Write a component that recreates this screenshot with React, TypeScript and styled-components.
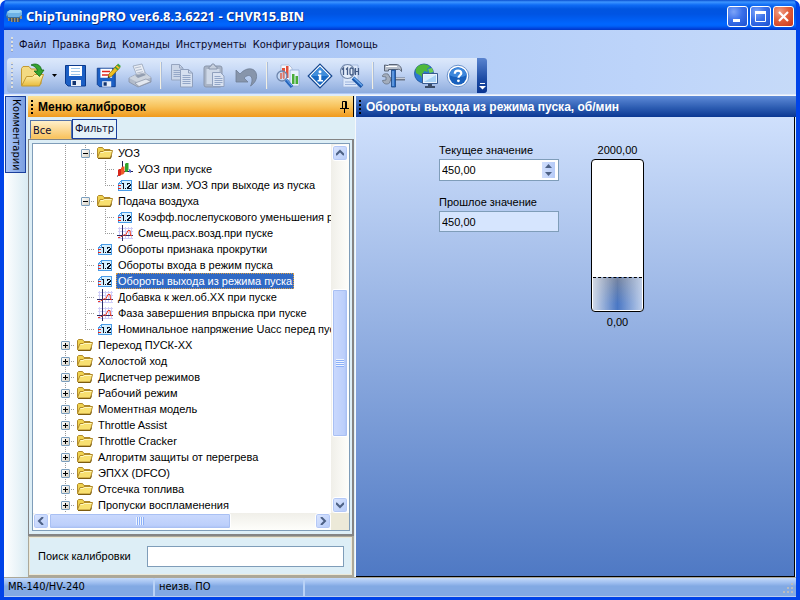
import React from 'react';
import styled, { createGlobalStyle, css } from 'styled-components';

const sans = '"Liberation Sans", Arial, sans-serif';
const menuFont = '"DejaVu Sans Condensed", Tahoma, sans-serif';

const Global = createGlobalStyle`
  * { box-sizing: border-box; }
  body { margin: 0; font: 11px/16px ${sans}; color: #000; }
  button, input { font: inherit; color: inherit; margin: 0; padding: 0; border: 0; background: none; }
  button { display: flex; align-items: center; justify-content: center; cursor: default; }
  svg { display: block; flex: none; }
`;

/* ---------- window frame ---------- */

const Window = styled.div`
  display: flex;
  flex-direction: column;
  min-height: 100vh;
  border: solid #0043e8;
  border-width: 0 4px 4px;
  border-radius: 7px 7px 0 0;
  background: #0055e5;
  overflow: hidden;
`;

const TitleBar = styled.header`
  display: flex;
  align-items: center;
  gap: 4px;
  height: 30px;
  margin: 0 -4px;
  padding: 2px 6px 0;
  background: linear-gradient(#0a4fd0 0, #3d95ff 2px, #0f6cf5 5px, #0055e0 9px, #0054e3 14px, #0066ff 24px, #0062f8 26px, #003dd7 29px, #0037c0 30px);
`;

const Title = styled.h1`
  flex: 1;
  margin: 0;
  font: bold 13px/18px "Noto Sans", "Open Sans", sans-serif;
  color: #fff;
  text-shadow: 1px 1px #0a2a80;
  white-space: nowrap;
`;

const CaptionButtons = styled.div`
  display: flex;
  gap: 2px;
`;

const CaptionButton = styled.button<{ $close?: boolean }>`
  width: 21px;
  height: 21px;
  border: 1px solid #fff;
  border-radius: 3px;
  background: ${p => p.$close
    ? 'radial-gradient(circle at 30% 25%, #f0a088 0, #e2603c 45%, #c8341a 100%)'
    : 'radial-gradient(circle at 30% 25%, #7da4f8 0, #3a70ea 45%, #1b4fd0 100%)'};
`;

/* ---------- menu and toolbar ---------- */

const Chrome = styled.div`
  background: linear-gradient(90deg, #9fbcf5 0, #b2cdf7 55%, #bdd4fa 80%, #c6daf8 100%);
  padding: 1px 2px 1px 3px;
  border-bottom: 1px solid #dfe9fb;
`;

const MenuBar = styled.nav`
  display: flex;
  align-items: center;
  height: 27px;
  padding-left: 4px;
`;

const Grip = styled.span<{ $h: number; $dark?: boolean }>`
  width: 3px;
  height: ${p => p.$h}px;
  flex: none;
  background: ${p => p.$dark
    ? 'repeating-linear-gradient(#000 0 2px, transparent 2px 4px) 0 0 / 2px 100% no-repeat'
    : 'repeating-linear-gradient(#dfe0dc 0 2px, #8fa5cf 2px 3px, transparent 3px 4px) 0 0 / 2px 100% no-repeat'};
`;

const MenuItem = styled.button`
  padding: 0 3px;
  height: 20px;
  font: 11px/20px ${menuFont};
  color: #0a0a2a;
  white-space: nowrap;
  &:first-of-type { margin-left: 2px; }
`;

const ToolBar = styled.div`
  display: flex;
  align-items: center;
  width: max-content;
  height: 35px;
  padding-left: 4px;
  border-radius: 4px 3px 3px 4px;
  background: linear-gradient(#dde9fb 0, #cbdcf7 30%, #b3c9ee 60%, #8eacdd 100%);
  overflow: hidden;
`;

const ToolGroup = styled.div`
  display: flex;
  &:first-of-type { margin-left: 3px; }
`;

const ToolButton = styled.button`
  width: 32px;
  height: 32px;
`;

const DropButton = styled.button`
  width: 11px;
  height: 32px;
`;

const Separator = styled.span`
  width: 2px;
  height: 27px;
  margin: 0 4px;
  background: linear-gradient(90deg, #f1efe4 50%, #a9bddd 50%);
`;

const Overflow = styled.button`
  align-self: stretch;
  width: 10px;
  margin-left: 3px;
  background: linear-gradient(#5a84cf, #1c4ba4 60%, #0a3591);
  align-items: flex-end;
  padding-bottom: 3px;
`;

/* ---------- main area ---------- */

const Main = styled.main`
  display: flex;
  flex: 1;
  background: #ddeef6;
`;

const SideStrip = styled.aside`
  width: 24px;
  flex: none;
  padding: 1px 0 0 1px;
  background: linear-gradient(90deg, #fff, #d9ebf3);
`;

const SideTab = styled.button`
  width: 21px;
  height: 77px;
  border: 1px solid #1b3f9c;
  background: linear-gradient(90deg, #a9c4f8, #7b9fe0);
  writing-mode: vertical-rl;
  font: 11px/16px ${menuFont};
`;

const LeftPanel = styled.section`
  display: flex;
  flex-direction: column;
  width: 326px;
  flex: none;
`;

const captionStyle = css`
  display: flex;
  align-items: center;
  gap: 4px;
  height: 21px;
  margin: 0;
  flex: none;
  font: bold 12px/20px ${sans};
  white-space: nowrap;
`;

const OrangeCaption = styled.header`
  ${captionStyle}
  margin-top: 1px;
  padding: 0 2px 0 3px;
  background: linear-gradient(#fce29a, #f8c35c 50%, #f09a1c);
  border-right: 1px solid #000;
`;

const BlueCaption = styled.header`
  ${captionStyle}
  padding-left: 3px;
  color: #fff;
  background: linear-gradient(#5f8bd8, #2d5db2 55%, #0a3793);
`;

const CaptionText = styled.h2`
  flex: 1;
  margin: 0;
  font: inherit;
`;

const PinButton = styled.button`
  width: 14px;
  height: 16px;
`;

const Tabs = styled.div`
  display: flex;
  align-items: flex-end;
  height: 22px;
  padding-left: 2px;
`;

const Tab = styled.button<{ $active?: boolean }>`
  height: ${p => (p.$active ? 19 : 20)}px;
  width: ${p => (p.$active ? 42 : 45)}px;
  padding-left: 2px;
  padding-top: ${p => (p.$active ? 2 : 0)}px;
  justify-content: flex-start;
  font: 11px/16px ${menuFont};
  color: #0b0b30;
  border: 1px solid ${p => (p.$active ? '#5573a8' : '#1b3f9c')};
  border-bottom-color: ${p => (p.$active ? '#f9c767' : '#1b3f9c')};
  background: ${p => (p.$active ? 'linear-gradient(#fff0cb, #f9c35f)' : '#e6f3f9')};
`;

const TreeFrame = styled.div`
  flex: 1;
  display: flex;
  padding: 3px 2px 3px 3px;
  border: solid #848484;
  border-width: 1px 2px 2px 1px;
`;

const TreeView = styled.div`
  flex: 1;
  min-width: 0;
  display: grid;
  grid-template: minmax(368px, 1fr) 17px / minmax(0, 1fr) 18px;
  border: 1px solid #7f9db9;
  background: #fff;
`;

const Tree = styled.ul`
  margin: 0;
  padding: 1px 0 0 22px;
  list-style: none;
  overflow: hidden;
  background: #fff;
`;

const Row = styled.li`
  display: flex;
  height: 16px;
`;

type CellKind = 'v' | 't' | 'l' | 'b';

const dotsV = 'repeating-linear-gradient(#9a9a9a 0 1px, transparent 1px 2px)';
const dotsH = 'repeating-linear-gradient(90deg, #9a9a9a 0 1px, transparent 1px 2px)';

const cellBackground: Record<CellKind, string> = {
  v: `${dotsV} 10px 0 / 1px 16px no-repeat`,
  t: `${dotsV} 10px 0 / 1px 16px no-repeat, ${dotsH} 10px 8px / 10px 1px no-repeat`,
  l: `${dotsV} 10px 0 / 1px 9px no-repeat, ${dotsH} 10px 8px / 10px 1px no-repeat`,
  b: `${dotsV} 10px 0 / 1px 16px no-repeat, ${dotsH} 10px 8px / 10px 1px no-repeat`,
};

const Cell = styled.span<{ $kind: CellKind }>`
  width: 20px;
  height: 16px;
  flex: none;
  display: flex;
  align-items: center;
  padding: 1px 0 0 6px;
  background: ${p => cellBackground[p.$kind]};
`;

const Expander = styled.button`
  width: 9px;
  height: 9px;
  border: 1px solid #7b9ebd;
  border-radius: 1px;
  background: linear-gradient(135deg, #fff, #d5d0c3);
`;

const IconCell = styled.span`
  width: 20px;
  flex: none;
  padding-left: 2px;
`;

const Label = styled.span<{ $selected?: boolean }>`
  margin-left: 1px;
  padding: 0 2px;
  white-space: nowrap;
  ${p => p.$selected && css`
    background: #316ac5;
    color: #fff;
    outline: 1px dotted #e0a040;
    outline-offset: -1px;
  `}
`;

const VBar = styled.div`
  display: flex;
  flex-direction: column;
  padding: 1px 1px 0 1px;
  background: linear-gradient(90deg, #f0efe9, #fefefb);
`;

const HBar = styled.div`
  display: flex;
  padding: 0 0 1px;
  background: linear-gradient(#f0efe9, #fefefb);
`;

const Corner = styled.div`
  background: #ece9d8;
`;

const ScrollButton = styled.button`
  width: 16px;
  height: 16px;
  flex: none;
  border: 1px solid #fff;
  border-radius: 3px;
  background: linear-gradient(135deg, #dbe6ff, #b6cbf8);
  box-shadow: inset 0 0 0 1px #b4c8f6;
`;

const Track = styled.div<{ $vertical?: boolean }>`
  flex: 1;
  display: flex;
  flex-direction: ${p => (p.$vertical ? 'column' : 'row')};
  min-width: 0;
`;

const TrackSpace = styled.span<{ $grow: number }>`
  flex: ${p => p.$grow} 1 0;
`;

const Thumb = styled.button<{ $vertical?: boolean; $grow: number }>`
  flex: ${p => p.$grow} 1 0;
  border: 1px solid #fff;
  border-radius: 2px;
  box-shadow: inset 0 0 0 1px #a9c0f3;
  background: linear-gradient(${p => (p.$vertical ? '90deg' : '180deg')}, #cad9fd, #bccffb 80%, #a9c0f3);
`;

const ThumbGrip = styled.span<{ $vertical?: boolean }>`
  width: 8px;
  height: 8px;
  background: repeating-linear-gradient(${p => (p.$vertical ? '180deg' : '90deg')}, #eef4fe 0 1px, #8cb0f8 1px 2px);
`;

const SearchBar = styled.form`
  display: flex;
  align-items: center;
  gap: 16px;
  height: 41px;
  flex: none;
  padding: 0 8px 0 9px;
  border: solid #aca899;
  border-width: 1px 2px 2px 1px;
  box-shadow: inset 0 0 0 1px #ece9d8;
`;

const SearchInput = styled.input`
  flex: 1;
  min-width: 0;
  height: 21px;
  border: 1px solid #7f9db9;
  background: #fff;
  padding: 0 3px;
`;

const RightPanel = styled.section`
  flex: 1;
  display: flex;
  flex-direction: column;
  margin-left: 1px;
  border: solid #f6f8fb;
  border-width: 1px 0 0 1px;
`;

const RightBody = styled.div`
  flex: 1;
  display: grid;
  grid-template-columns: 120px 53px;
  align-content: start;
  column-gap: 32px;
  padding: 25px 0 0 83px;
  margin-right: 1px;
  border: solid #000;
  border-width: 0 1px 1px 0;
  background: linear-gradient(#cfe0fc, #4f79c4);
`;

const Fields = styled.div`
  display: flex;
  flex-direction: column;
  gap: 13px;
`;

const Field = styled.label`
  display: flex;
  flex-direction: column;
  gap: 1px;
`;

const Spin = styled.span<{ $readOnly?: boolean }>`
  display: flex;
  align-items: center;
  height: ${p => (p.$readOnly ? 21 : 22)}px;
  padding: 0 3px 0 2px;
  border: 1px solid #7f9db9;
  background: ${p => (p.$readOnly ? '#d6e5fe' : '#fff')};
`;

const ValueInput = styled.input`
  flex: 1;
  min-width: 0;
  height: 18px;
`;

const SpinButtons = styled.span`
  width: 13px;
  height: 16px;
  display: flex;
  flex-direction: column;
`;

const SpinButton = styled.button`
  width: 13px;
  height: 8px;
  background: linear-gradient(90deg, #d0defc, #b6cbf8);
`;

const GaugeColumn = styled.div`
  display: flex;
  flex-direction: column;
  align-items: center;
  white-space: nowrap;
`;

const Gauge = styled.div`
  display: flex;
  flex-direction: column;
  justify-content: flex-end;
  width: 53px;
  height: 153px;
  margin: 1px 0 2px;
  padding: 1px;
  border: 1px solid #000;
  border-radius: 4px;
  background: #fff;
`;

const GaugeFill = styled.div`
  border-top: 1px dashed #000;
  background:
    linear-gradient(90deg, rgba(220, 226, 236, 0.9), rgba(200, 214, 238, 0) 50%, rgba(200, 214, 238, 0.9)),
    linear-gradient(#74839f, #4a77c4 80%);
`;

/* ---------- status bar ---------- */

const StatusBar = styled.footer`
  display: flex;
  height: 20px;
  flex: none;
  border-top: 1px solid #aca899;
  border-bottom: 1px solid #b9cdf0;
  background: linear-gradient(#c4dafa, #9abbee 30%, #82a9e3 45%, #82a9e3);
`;

const StatusPart = styled.span<{ $width?: number }>`
  ${p => (p.$width ? css`width: ${p.$width}px; border-right: 2px solid #b9d2f6;` : css`flex: 1;`)}
  padding: 1px 4px;
  font: 11px/16px ${menuFont};
  white-space: nowrap;
`;

const ResizeGrip = styled.svg`
  align-self: flex-end;
`;

/* ---------- icons ---------- */

const ChipIcon = () => (
  <svg width="16" height="16" viewBox="0 0 16 16">
    <path d="M1 4l3-2h11l1 2v4l-2 1H2L0 8z" fill="#6db2e6" />
    <path d="M1 4l3-2h11l1 2-3 1H3z" fill="#9ad2f4" />
    <path d="M1 6l1 3h11l3-2v3l-2 1H2L0 9z" fill="#3b6f9f" />
    <path d="M3 10v3M6 10v4M9 10v4M12 10v4M15 8v3" stroke="#c5a05a" strokeWidth="1.5" />
    <path d="M4 10v3M7 10v4M10 10v4M13 10v4" stroke="#4b3c22" />
  </svg>
);

const OpenIcon = () => (
  <svg width="26" height="26" viewBox="0 0 26 26">
    <defs>
      <linearGradient id="fold" x1="0" y1="0" x2="0" y2="1">
        <stop offset="0" stopColor="#fff3b0" /><stop offset="1" stopColor="#e8bb3c" />
      </linearGradient>
    </defs>
    <path d="M1.500 22V5.500l1.500-2h6l2 2.500h10v15z" fill="#f3da82" stroke="#c39a32" />
    <path d="M1.500 23l5-9.500h6l2-2h9L19.500 23z" fill="url(#fold)" stroke="#c39a32" />
    <path d="M11 2c5-2.500 10 0 10.500 5H24l-4.500 6.500L14 8h3.500c-.5-3-3-5-6.500-6z" fill="#35a32f" stroke="#156b1a" strokeWidth=".8" />
  </svg>
);

const DownArrow = () => (
  <svg width="5" height="3" viewBox="0 0 5 3"><path d="M0 0h5L2.500 3z" fill="#000" /></svg>
);

const Floppy = () => (
  <>
    <path d="M2.500 2.500h20v20.500H5L2.500 20.500z" fill="#1c5fc4" stroke="#0c3a8c" />
    <path d="M6 3h13v10H6z" fill="#fff" />
    <path d="M8 17h10v6H8z" fill="#e8eef8" />
    <path d="M9.500 18h3.500v4H9.500z" fill="#12336f" />
  </>
);

const SaveIcon = () => (
  <svg width="26" height="26" viewBox="0 0 26 26">
    <Floppy />
    <path d="M8 5.500h9M8 8.500h9M8 11.500h9" stroke="#9ec6ea" />
  </svg>
);

const SaveEditIcon = () => (
  <svg width="26" height="26" viewBox="0 0 26 26">
    <g transform="translate(0 3) scale(.9)"><Floppy /></g>
    <path d="M7 8.500h8M7 12h8" stroke="#e0271c" strokeWidth="1.500" />
    <path d="M13 15l1-4L22 2l3 2.500L17 13z" fill="#f0c020" stroke="#8a6a10" strokeWidth=".8" />
    <path d="M22 2l1-1.500 2.800 2.500L25 4.500z" fill="#3aa53a" />
    <path d="M20 4l3 2.700" stroke="#2f9e35" strokeWidth="1.500" />
    <path d="M13 15l.5-2 1.500 1.200z" fill="#222" />
  </svg>
);

const PrintIcon = () => (
  <svg width="26" height="26" viewBox="0 0 26 26">
    <path d="M6 3l9-2 4 11-8 3z" fill="#e9edf4" stroke="#98a4b8" strokeWidth=".8" />
    <path d="M8 5l6-1.300M9 7.500l6-1.300M10 10l6-1.300" stroke="#b2bccd" />
    <path d="M2 15l6-3 10-2 6 4.500v4.500l-13 5-9-5z" fill="#b3bcca" stroke="#8691a5" strokeWidth=".8" />
    <path d="M2 15l6-3 10-2 6 4.500-13 5z" fill="#ced5df" />
    <path d="M8 20l11-4 5 2.500-12 5z" fill="#e3e8f0" stroke="#8691a5" strokeWidth=".7" />
    <path d="M8 12.500l9-2 2 1.500-8 3z" fill="#929db0" />
  </svg>
);

const CopyIcon = () => (
  <svg width="26" height="26" viewBox="0 0 26 26">
    <path d="M2.500 1.500h8l3.500 3.500v12H2.500z" fill="#ccd7e9" stroke="#96a5c0" />
    <path d="M10.500 1.500V5H14" fill="none" stroke="#96a5c0" />
    <path d="M4.500 7.500h7M4.500 9.500h7M4.500 11.500h7M4.500 13.500h7" stroke="#96a8c8" />
    <path d="M11.500 6.500h8l4 3.500v14h-12z" fill="#d6e0f0" stroke="#90a0bd" />
    <path d="M19.500 6.500V10h4" fill="none" stroke="#90a0bd" />
    <path d="M13.500 12.500h8M13.500 14.500h8M13.500 16.500h8M13.500 18.500h8M13.500 20.500h8" stroke="#93a6c7" />
  </svg>
);

const PasteIcon = () => (
  <svg width="26" height="26" viewBox="0 0 26 26">
    <rect x="3" y="3" width="18" height="21" rx="2" fill="#a9b4c6" stroke="#8b97ac" />
    <path d="M5.500 6h13v15h-13z" fill="#cfd9e8" />
    <path d="M8 6V4l2-1 1-2h2l1 2 2 1v2z" fill="#c6cfdd" stroke="#8491a8" strokeWidth=".9" />
    <path d="M11.500 9.500h8l3.500 3.500v10.500H11.500z" fill="#d9e2f1" stroke="#90a0bd" />
    <path d="M13.500 13.500h6M13.500 15.500h8M13.500 17.500h8M13.500 19.500h8M13.500 21.500h6" stroke="#93a6c7" />
  </svg>
);

const UndoIcon = () => (
  <svg width="26" height="26" viewBox="0 0 26 26">
    <path d="M3 7v12h12l-4-4c4-4 8-3 8 2 0 2-.5 4-1.500 6C22 20 24 16 23.500 12 23 5 14 3 7 11z" fill="#8795ab" stroke="#6e7d96" strokeWidth=".8" />
  </svg>
);

const ChartIcon = () => (
  <svg width="26" height="26" viewBox="0 0 26 26">
    <path d="M6 2h8l3 3v12H6z" fill="#f6f8fd" stroke="#a6b6d4" strokeWidth=".8" />
    <path d="M7 5h3v10H7zM11 3h2.500v12H11z" fill="#e2513b" />
    <path d="M15 7h9v16h-9z" fill="#e7f1fb" stroke="#92abd4" strokeWidth=".8" />
    <path d="M17 11h2.500v10H17zM20.500 13H23v8h-2.500z" fill="#48ad38" />
    <circle cx="7" cy="13" r="5" fill="#c9dcf5" fillOpacity=".75" stroke="#6e86ad" strokeWidth="1.300" />
    <path d="M5 10h2v6H5zM8 9h1.500v7H8z" fill="#dd6b55" fillOpacity=".8" />
    <path d="M11 17l6 7" stroke="#2464bc" strokeWidth="3.400" />
    <path d="M11 16l6 7" stroke="#6ca8ee" />
  </svg>
);

const InfoIcon = () => (
  <svg width="26" height="26" viewBox="0 0 26 26">
    <path d="M13 1.200L24.800 13 13 24.800 1.200 13z" fill="#fff" stroke="#13468f" strokeWidth="1.200" />
    <path d="M13 3.800l9.200 9.200-9.200 9.200L3.800 13z" fill="#1769c4" />
    <path d="M13 3.800l9.200 9.200H3.800z" fill="#3f8ddb" />
    <circle cx="13" cy="8.800" r="1.500" fill="#fff" />
    <path d="M11 11.500h3.300v5.500H16v1.500h-5.500V17h1.300v-4H11z" fill="#fff" />
  </svg>
);

const BinaryIcon = () => (
  <svg width="26" height="26" viewBox="0 0 26 26">
    <path d="M4 2h15v22H4z" fill="#dce8fa" stroke="#9cb2db" strokeWidth=".8" />
    <path d="M6 19h9M6 21.500h11" stroke="#9cb2db" />
    <circle cx="8.500" cy="8.500" r="7" fill="#e6effb" fillOpacity=".8" stroke="#7388aa" strokeWidth="1.200" />
    <path d="M3 6.500l1.500-1.500v7M7 6.500L8.500 5v7M11 6v5l1 1h1l1-1V6l-1-1h-1z" fill="none" stroke="#445c86" strokeWidth="1.300" />
    <path d="M16.500 5v7M16.500 8.500h3M19.500 5v7" stroke="#445c86" strokeWidth="1.200" />
    <path d="M14 15l9 8.500" stroke="#1a55a8" strokeWidth="4" />
    <path d="M14.500 14.500l8.500 8" stroke="#69a8ec" strokeWidth="1.500" />
  </svg>
);

const ToolsIcon = () => (
  <svg width="26" height="26" viewBox="0 0 26 26">
    <path d="M6 16h18" stroke="#6d7788" strokeWidth="3" />
    <path d="M6 15.500h18" stroke="#c6ccd6" strokeWidth="1.200" />
    <path d="M7 11c-4-1-6 1-5.500 2.500L5 14v3l-3.500.5C2 21 6 22 8.500 20l1.500-4z" fill="#a3adbc" stroke="#667183" strokeWidth=".8" />
    <path d="M3.500 2v6h4V6.500H16c2-.5 3.500 0 4.500 2C21 4.500 18.500 1.500 15 1.500H8L7 2.500z" fill="#b7bfcb" stroke="#596477" />
    <path d="M5 3.500h11" stroke="#fff" />
    <path d="M10.500 7h4v17h-4z" fill="#2b6cc4" stroke="#194683" strokeWidth=".8" />
    <path d="M12 8v15" stroke="#8fc0f4" />
  </svg>
);

const NetIcon = () => (
  <svg width="26" height="26" viewBox="0 0 26 26">
    <circle cx="11" cy="10.500" r="9.500" fill="#2c78d0" stroke="#1c4f96" strokeWidth=".8" />
    <path d="M4 4c4-3.500 9-3.500 13-.5l-3 2.500 1 3-4-1-1 3 3 3-3 4-2-5-5-3-.5-3z" fill="#4fb83b" />
    <path d="M15 6l4-1 1.500 4-4 1z" fill="#6ed04c" />
    <path d="M9.500 10.500h15v10h-15z" fill="#e8f3fd" stroke="#3a5c90" />
    <path d="M11 12h12v7H11z" fill="#a9d2f6" />
    <path d="M11 12h12L11 19z" fill="#d7ecfc" />
    <path d="M15 21h4v2h3v2H12v-2h3z" fill="#3b4b66" />
  </svg>
);

const HelpIcon = () => (
  <svg width="26" height="26" viewBox="0 0 26 26">
    <circle cx="13" cy="13" r="10.800" fill="#fff" stroke="#6c93cc" />
    <circle cx="13" cy="13" r="8.800" fill="#1860bd" />
    <path d="M4.300 12a8.800 8.800 0 0 1 17.400 0c-5 3-12 3-17.400 0z" fill="#3d87dc" />
    <path d="M9.800 10.800c0-4.300 6.500-4 6.500-.6 0 2-2.800 2.200-2.800 4.600" fill="none" stroke="#fff" strokeWidth="2.200" />
    <circle cx="13.400" cy="17.800" r="1.400" fill="#fff" />
  </svg>
);

const FolderIcon = () => (
  <svg width="16" height="16" viewBox="0 0 16 16">
    <path d="M.5 12.500V3.500l1-1h4l1.500 2h6v2" fill="#f0d24e" stroke="#b0892a" />
    <path d="M.5 12.500L3 6.500h3l1-1h8.500l-2 7.500H1z" fill="#f8e070" stroke="#b0892a" />
    <path d="M3.500 7.500h3l1-1h7" fill="none" stroke="#fff8c0" />
    <path d="M1 13.500h12.500l1-3" fill="none" stroke="#7c5c10" />
  </svg>
);

const NumberIcon = () => (
  <svg width="16" height="16" viewBox="0 0 16 16" shapeRendering="crispEdges">
    <path d="M4 3h11v11H1V6h1V5h1V4h1z" fill="#4a9ce8" />
    <path d="M5 4h9v9H2V7h3z" fill="#d5f0ff" />
    <path d="M3 5h1v1H3z" fill="#fff" />
    <path d="M1 8h3v1H1zM1 11h3v1H1z" fill="#e8241a" />
    <path d="M5 6h2v6H6V7H5zM8 11h1v1H8zM10 6h3v1h1v2h-1v1h-1v1h2v1h-4v-2h1V9h1V8h1V7h-2v1h-1z" fill="#0a1020" />
  </svg>
);

const CurveIcon = () => (
  <svg width="16" height="16" viewBox="0 0 16 16">
    <path d="M2.500 2v12M8.500 2v12M11.500 2v12M14.500 2v12M1 3.500h15M1 6.500h15M1 13.500h15" stroke="#cfcef8" />
    <path d="M5.500 0v16M0 10.500h16" stroke="#2c2c66" />
    <path d="M1 12.500h2l1-1h1L7 9.500l1.500 1L11 5.500h2l.5 5h1.500" fill="none" stroke="#ee3a24" />
  </svg>
);

const BarsIcon = () => (
  <svg width="16" height="16" viewBox="0 0 16 16">
    <path d="M5.500 0v11M0 15.500l5.500-5H16" stroke="#22224e" fill="none" />
    <path d="M1 9l1-1h3v5l-2 2H1z" fill="#d8281c" />
    <path d="M4 7l1.500-1.500h2V12L6 13.500H4z" fill="#f05a28" />
    <path d="M8 3l1-1h2.500v7L10 11H8z" fill="#32a62e" />
    <path d="M12 8l2 1v3l-2-1z" fill="#5a6ad0" />
  </svg>
);

const Chevron = ({ d }: { d: string }) => (
  <svg width="8" height="8" viewBox="0 0 8 8"><path d={d} fill="none" stroke="#4d6185" strokeWidth="2" /></svg>
);

/* ---------- data ---------- */

type IconKind = 'folder' | 'number' | 'curve' | 'bars';

interface TreeRow {
  cells: string;
  icon: IconKind;
  text: string;
  selected?: boolean;
}

const treeIcons: Record<IconKind, React.FC> = {
  folder: FolderIcon,
  number: NumberIcon,
  curve: CurveIcon,
  bars: BarsIcon,
};

/* Cells: v = line, t = branch, l = last branch, "-" and "+" = expander. */
const rows: TreeRow[] = [
  { cells: 'v-', icon: 'folder', text: 'УОЗ' },
  { cells: 'vvt', icon: 'bars', text: 'УОЗ при пуске' },
  { cells: 'vvl', icon: 'number', text: 'Шаг изм. УОЗ при выходе из пуска' },
  { cells: 'v-', icon: 'folder', text: 'Подача воздуха' },
  { cells: 'vvt', icon: 'number', text: 'Коэфф.послепускового уменьшения р' },
  { cells: 'vvl', icon: 'curve', text: 'Смещ.расх.возд.при пуске' },
  { cells: 'vt', icon: 'number', text: 'Обороты признака прокрутки' },
  { cells: 'vt', icon: 'number', text: 'Обороты входа в режим пуска' },
  { cells: 'vt', icon: 'number', text: 'Обороты выхода из режима пуска', selected: true },
  { cells: 'vt', icon: 'curve', text: 'Добавка к жел.об.ХХ при пуске' },
  { cells: 'vt', icon: 'curve', text: 'Фаза завершения впрыска при пуске' },
  { cells: 'vl', icon: 'number', text: 'Номинальное напряжение Uacc перед пус' },
  { cells: '+', icon: 'folder', text: 'Переход ПУСК-ХХ' },
  { cells: '+', icon: 'folder', text: 'Холостой ход' },
  { cells: '+', icon: 'folder', text: 'Диспетчер режимов' },
  { cells: '+', icon: 'folder', text: 'Рабочий режим' },
  { cells: '+', icon: 'folder', text: 'Моментная модель' },
  { cells: '+', icon: 'folder', text: 'Throttle Assist' },
  { cells: '+', icon: 'folder', text: 'Throttle Cracker' },
  { cells: '+', icon: 'folder', text: 'Алгоритм защиты от перегрева' },
  { cells: '+', icon: 'folder', text: 'ЭПХХ (DFCO)' },
  { cells: '+', icon: 'folder', text: 'Отсечка топлива' },
  { cells: '+', icon: 'folder', text: 'Пропуски воспламенения' },
];

const menu = ['Файл', 'Правка', 'Вид', 'Команды', 'Инструменты', 'Конфигурация', 'Помощь'];

const toolGroups: { name: string; Icon: React.FC; drop?: boolean }[][] = [
  [
    { name: 'Открыть', Icon: OpenIcon, drop: true },
    { name: 'Сохранить', Icon: SaveIcon },
    { name: 'Сохранить как', Icon: SaveEditIcon },
    { name: 'Печать', Icon: PrintIcon },
  ],
  [
    { name: 'Копировать', Icon: CopyIcon },
    { name: 'Вставить', Icon: PasteIcon },
    { name: 'Отменить', Icon: UndoIcon },
  ],
  [
    { name: 'Графики', Icon: ChartIcon },
    { name: 'Информация', Icon: InfoIcon },
    { name: 'Просмотр данных', Icon: BinaryIcon },
  ],
  [
    { name: 'Настройки', Icon: ToolsIcon },
    { name: 'Сеть', Icon: NetIcon },
    { name: 'Справка', Icon: HelpIcon },
  ],
];

const maximum = 2000;
const current = 450;
const gaugeHeight = 147;

const TreeLine = ({ row }: { row: TreeRow }) => {
  const Icon = treeIcons[row.icon];
  return (
    <Row role="treeitem" aria-selected={!!row.selected}>
      {row.cells.split('').map((c, i) =>
        c === '+' || c === '-' ? (
          <Cell key={i} $kind="b">
            <Expander aria-label={c === '+' ? 'Развернуть' : 'Свернуть'}>
              <svg width="5" height="5" viewBox="0 0 5 5">
                <path d={c === '+' ? 'M0 2.500h5M2.500 0v5' : 'M0 2.500h5'} stroke="#000" />
              </svg>
            </Expander>
          </Cell>
        ) : (
          <Cell key={i} $kind={c as CellKind} />
        ),
      )}
      <IconCell><Icon /></IconCell>
      <Label $selected={row.selected}>{row.text}</Label>
    </Row>
  );
};

export default function App() {
  return (
    <>
      <Global />
      <Window>
        <TitleBar>
          <ChipIcon />
          <Title>ChipTuningPRO ver.6.8.3.6221 - CHVR15.BIN</Title>
          <CaptionButtons>
            <CaptionButton aria-label="Свернуть">
              <svg width="15" height="15" viewBox="0 0 15 15"><path d="M3 11.500h7" stroke="#fff" strokeWidth="3" /></svg>
            </CaptionButton>
            <CaptionButton aria-label="Развернуть">
              <svg width="15" height="15" viewBox="0 0 15 15">
                <path d="M2.500 3.500h10v9h-10z" fill="none" stroke="#fff" />
                <path d="M2 3.500h11" stroke="#fff" strokeWidth="3" />
              </svg>
            </CaptionButton>
            <CaptionButton $close aria-label="Закрыть">
              <svg width="15" height="15" viewBox="0 0 15 15"><path d="M3 3l9 9M12 3l-9 9" stroke="#fff" strokeWidth="2.200" /></svg>
            </CaptionButton>
          </CaptionButtons>
        </TitleBar>

        <Chrome>
          <MenuBar>
            <Grip $h={15} />
            {menu.map(m => <MenuItem key={m}>{m}</MenuItem>)}
          </MenuBar>
          <ToolBar role="toolbar">
            <Grip $h={27} />
            {toolGroups.map((group, g) => (
              <React.Fragment key={g}>
                {g > 0 && <Separator />}
                <ToolGroup>
                  {group.map(({ name, Icon, drop }) => (
                    <React.Fragment key={name}>
                      <ToolButton aria-label={name}><Icon /></ToolButton>
                      {drop && <DropButton aria-label="Недавние файлы"><DownArrow /></DropButton>}
                    </React.Fragment>
                  ))}
                </ToolGroup>
              </React.Fragment>
            ))}
            <Overflow aria-label="Ещё">
              <svg width="7" height="7" viewBox="0 0 7 7">
                <path d="M1 .5h5" stroke="#fff" />
                <path d="M0 3h7L3.500 6.500z" fill="#fff" />
              </svg>
            </Overflow>
          </ToolBar>
        </Chrome>

        <Main>
          <SideStrip><SideTab>Комментарии</SideTab></SideStrip>

          <LeftPanel>
            <OrangeCaption>
              <Grip $h={14} $dark />
              <CaptionText>Меню калибровок</CaptionText>
              <PinButton aria-label="Закрепить">
                <svg width="9" height="12" viewBox="0 0 9 12">
                  <path d="M2.500 7V.5h4V7M5.500 1v6M0 7.500h9M4.500 8v4" fill="none" stroke="#000" />
                </svg>
              </PinButton>
            </OrangeCaption>
            <Tabs role="tablist">
              <Tab role="tab" aria-selected $active>Все</Tab>
              <Tab role="tab" aria-selected={false}>Фильтр</Tab>
            </Tabs>
            <TreeFrame>
              <TreeView>
                <Tree role="tree">
                  {rows.map(r => <TreeLine key={r.text} row={r} />)}
                </Tree>
                <VBar>
                  <ScrollButton aria-label="Вверх"><Chevron d="M0 6l4-4 4 4" /></ScrollButton>
                  <Track $vertical>
                    <TrackSpace $grow={128} />
                    <Thumb $vertical $grow={147} aria-label="Прокрутка"><ThumbGrip $vertical /></Thumb>
                    <TrackSpace $grow={60} />
                  </Track>
                  <ScrollButton aria-label="Вниз"><Chevron d="M0 2l4 4 4-4" /></ScrollButton>
                </VBar>
                <HBar>
                  <ScrollButton aria-label="Влево"><Chevron d="M6 0L2 4l4 4" /></ScrollButton>
                  <Track>
                    <Thumb $grow={180} aria-label="Прокрутка"><ThumbGrip /></Thumb>
                    <TrackSpace $grow={84} />
                  </Track>
                  <ScrollButton aria-label="Вправо"><Chevron d="M2 0l4 4-4 4" /></ScrollButton>
                </HBar>
                <Corner />
              </TreeView>
            </TreeFrame>
            <SearchBar>
              <label htmlFor="search">Поиск калибровки</label>
              <SearchInput id="search" type="text" />
            </SearchBar>
          </LeftPanel>

          <RightPanel>
            <BlueCaption>
              <Grip $h={14} $dark />
              <CaptionText>Обороты выхода из режима пуска, об/мин</CaptionText>
            </BlueCaption>
            <RightBody>
              <Fields>
                <Field>
                  Текущее значение
                  <Spin>
                    <ValueInput defaultValue="450,00" />
                    <SpinButtons>
                      <SpinButton aria-label="Больше">
                        <svg width="7" height="4" viewBox="0 0 7 4"><path d="M0 4h7L3.500 0z" fill="#4d6185" /></svg>
                      </SpinButton>
                      <SpinButton aria-label="Меньше">
                        <svg width="7" height="4" viewBox="0 0 7 4"><path d="M0 0h7L3.500 4z" fill="#4d6185" /></svg>
                      </SpinButton>
                    </SpinButtons>
                  </Spin>
                </Field>
                <Field>
                  Прошлое значение
                  <Spin $readOnly>
                    <ValueInput readOnly value="450,00" />
                  </Spin>
                </Field>
              </Fields>
              <GaugeColumn>
                <span>2000,00</span>
                <Gauge>
                  <GaugeFill style={{ height: Math.round((current / maximum) * gaugeHeight) }} />
                </Gauge>
                <span>0,00</span>
              </GaugeColumn>
            </RightBody>
          </RightPanel>
        </Main>

        <StatusBar>
          <StatusPart $width={151}>MR-140/HV-240</StatusPart>
          <StatusPart $width={150}>неизв. ПО</StatusPart>
          <StatusPart />
          <ResizeGrip width="14" height="14" viewBox="0 0 14 14">
            <path d="M9 1h2v2H9zM5 5h2v2H5zM9 5h2v2H9zM1 9h2v2H1zM5 9h2v2H5zM9 9h2v2H9z" fill="#b9bcc0" />
          </ResizeGrip>
        </StatusBar>
      </Window>
    </>
  );
}
